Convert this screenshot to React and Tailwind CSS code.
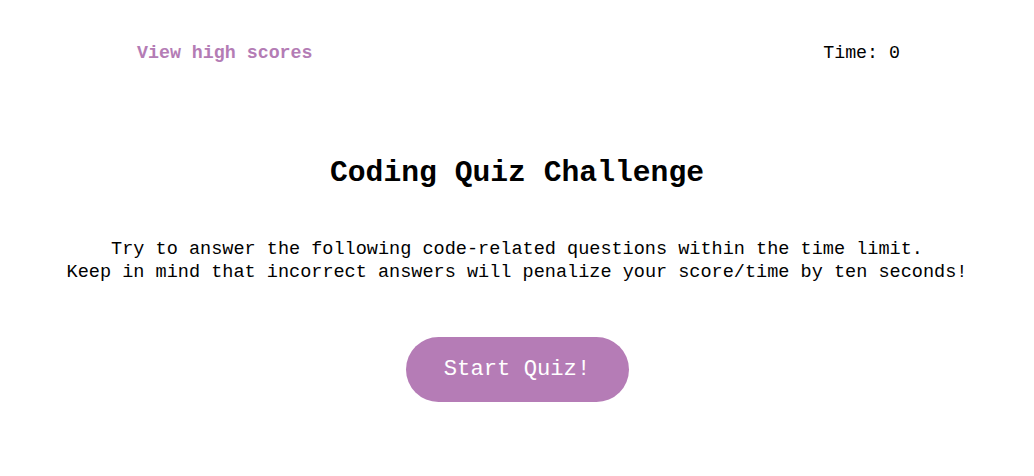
export default function App() {
  return (
    <div className="min-h-screen bg-white text-black font-['Liberation_Mono',monospace]">
      <header className="flex items-center justify-between pl-[137px] pr-[134px] pt-[41px]">
        <a href="#" className="text-[18.3px] leading-[24px] font-bold text-[#b47cb5]">
          View high scores
        </a>
        <div className="text-[18.3px] leading-[24px]">Time: 0</div>
      </header>

      <main className="flex flex-col items-center text-center">
        <h1 className="mt-[88px] text-[29.7px] leading-[40px] font-bold">Coding Quiz Challenge</h1>
        <p className="mt-[45px] text-[18.55px] leading-[23px]">
          Try to answer the following code-related questions within the time limit.
          <br />
          Keep in mind that incorrect answers will penalize your score/time by ten seconds!
        </p>
        <button className="mt-[53px] w-[223px] h-[65px] rounded-full bg-[#b57cb6] text-white text-[22.2px]">
          Start Quiz!
        </button>
      </main>
    </div>
  );
}
